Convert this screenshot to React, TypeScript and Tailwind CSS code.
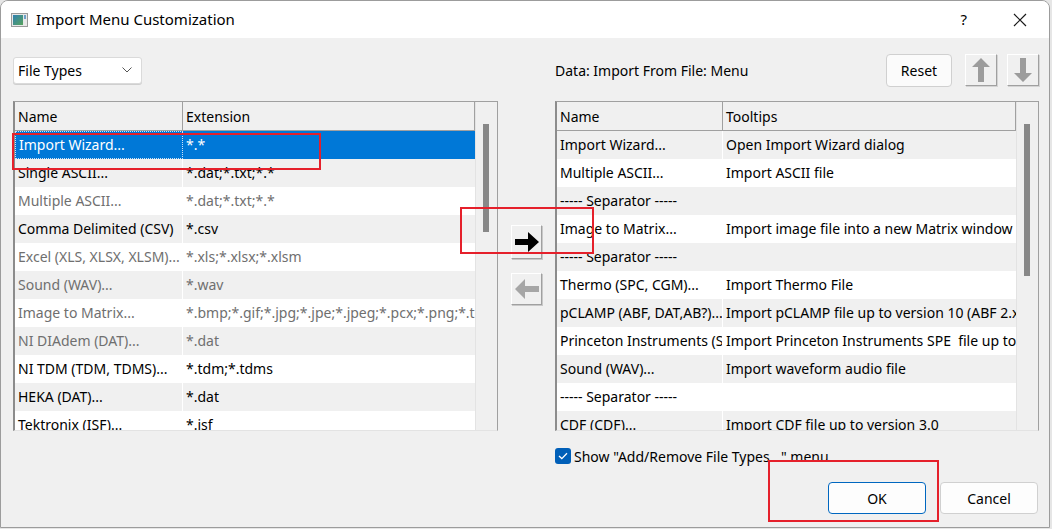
import React from "react";

type Row = { name: string; value: string; dim?: boolean; sep?: boolean };

const leftRows: Row[] = [
  { name: "Import Wizard...", value: "*.*" },
  { name: "Single ASCII...", value: "*.dat;*.txt;*.*" },
  { name: "Multiple ASCII...", value: "*.dat;*.txt;*.*", dim: true },
  { name: "Comma Delimited (CSV)", value: "*.csv" },
  { name: "Excel (XLS, XLSX, XLSM)...", value: "*.xls;*.xlsx;*.xlsm", dim: true },
  { name: "Sound (WAV)...", value: "*.wav", dim: true },
  { name: "Image to Matrix...", value: "*.bmp;*.gif;*.jpg;*.jpe;*.jpeg;*.pcx;*.png;*.tga;", dim: true },
  { name: "NI DIAdem (DAT)...", value: "*.dat", dim: true },
  { name: "NI TDM (TDM, TDMS)...", value: "*.tdm;*.tdms" },
  { name: "HEKA (DAT)...", value: "*.dat" },
  { name: "Tektronix (ISF)...", value: "*.isf" },
];

const rightRows: Row[] = [
  { name: "Import Wizard...", value: "Open Import Wizard dialog" },
  { name: "Multiple ASCII...", value: "Import ASCII file" },
  { name: "----- Separator -----", value: "", sep: true },
  { name: "Image to Matrix...", value: "Import image file into a new Matrix window" },
  { name: "----- Separator -----", value: "", sep: true },
  { name: "Thermo (SPC, CGM)...", value: "Import Thermo File" },
  { name: "pCLAMP (ABF, DAT,AB?)...", value: "Import pCLAMP file up to version 10 (ABF 2.x)" },
  { name: "Princeton Instruments (SPE)...", value: "Import Princeton Instruments SPE  file up to version 3" },
  { name: "Sound (WAV)...", value: "Import waveform audio file" },
  { name: "----- Separator -----", value: "", sep: true },
  { name: "CDF (CDF)...", value: "Import CDF file up to version 3.0" },
];

function Grid({
  rows,
  second,
  nameW,
  thumbH,
  selected,
  startGray,
}: {
  rows: Row[];
  second: string;
  nameW: string;
  thumbH: string;
  selected?: number;
  startGray: boolean;
}) {
  return (
    <div className="flex h-[330px] border border-[#a0a0a0] border-b-[#e3e3e3] border-l-2 border-l-[#8c8c8c] bg-[#f0f0f0]">
      <div className="flex flex-1 flex-col overflow-hidden">
        <div className="flex h-[29px] shrink-0 border-b border-r border-[#a0a0a0] bg-[#f0f0f0]">
          <div className={`${nameW} flex shrink-0 items-center border-r border-[#a0a0a0] px-[3px]`}>Name</div>
          <div className="flex flex-1 items-center px-[3px]">{second}</div>
        </div>
        {rows.map((r, i) => {
          const sel = i === selected;
          const gray = (i % 2 === 0) !== startGray;
          const bg = sel ? "bg-[#0078d7] text-white" : gray ? "bg-[#f0f0f0]" : "bg-white";
          const color = sel ? "" : r.dim ? "text-[#6f6f6f]" : "text-black";
          return (
            <div key={i} className={`flex h-[28px] shrink-0 ${bg} ${color}`}>
              {r.sep ? (
                <div className="flex flex-1 items-center whitespace-pre px-[3px] pb-[2px]">{r.name}</div>
              ) : (
                <>
                  <div
                    className={`${nameW} flex shrink-0 items-center overflow-hidden whitespace-pre px-[3px] pb-[2px] ${
                      sel ? "border border-dotted border-[#cfe3f7]" : "border-r border-white"
                    }`}
                  >
                    {r.name}
                  </div>
                  <div className="flex flex-1 items-center overflow-hidden whitespace-pre px-[3px] pb-[2px]">{r.value}</div>
                </>
              )}
            </div>
          );
        })}
      </div>
      <div className="w-[22px] shrink-0 border-l border-[#e3e3e3] pl-[7px] pt-[22px]">
        <div className={`w-[6px] ${thumbH} bg-[#888888]`} />
      </div>
    </div>
  );
}

function ArrowBtn({ children }: { children: React.ReactNode }) {
  return (
    <div className="flex h-[32px] w-[32px] items-center justify-center border border-t-white border-l-white border-b-[#a0a0a0] border-r-[#a0a0a0] bg-[#f0f0f0] shadow-[1px_1px_0_#d4d4d4]">
      {children}
    </div>
  );
}

export default function App() {
  return (
    <div className="relative h-[529px] w-[1052px] overflow-hidden bg-[#e6e6e6] font-['Noto_Sans','Liberation_Sans',sans-serif] text-[14px] text-black">
      <div className="flex h-[528px] w-[1050px] flex-col overflow-hidden rounded-t-[8px] border border-[#9c9c9c] bg-[#f0f0f0]">
        {/* title bar */}
        <div className="flex h-[37px] shrink-0 items-center bg-white pl-[10px]">
          <svg width="18" height="16" viewBox="0 0 18 16">
            <rect x="0.5" y="1.5" width="16" height="13" fill="#e8e8e8" stroke="#9a9a9a" />
            <defs>
              <linearGradient id="g" x1="0" y1="0" x2="1" y2="1">
                <stop offset="0" stopColor="#2f7fb0" />
                <stop offset="1" stopColor="#58a35c" />
              </linearGradient>
            </defs>
            <rect x="2" y="3" width="10" height="10" fill="url(#g)" />
            <rect x="13" y="3" width="2" height="4" fill="#6da0c8" />
          </svg>
          <span className="ml-[7px] text-[15px]">Import Menu Customization</span>
          <div className="flex-1" />
          <span className="mr-[46px] text-[15px]">?</span>
          <svg width="14" height="14" viewBox="0 0 14 14" className="mr-[22px]">
            <path d="M1 1 L13 13 M13 1 L1 13" stroke="#1a1a1a" strokeWidth="1.2" />
          </svg>
        </div>

        {/* body */}
        <div className="flex pl-[12px] pt-[15px]">
          {/* left column */}
          <div className="flex w-[485px] flex-col">
            <div className="flex h-[34px] items-center">
              <div className="flex h-[27px] w-[129px] items-center justify-between rounded-[3px] border border-[#dadada] bg-white pl-[4px] pr-[9px] shadow-[0_1px_0_#cfcfcf]">
                <span className="pt-[1px]">File Types</span>
                <svg width="10" height="6" viewBox="0 0 10 6">
                  <path d="M0.5 0.5 L5 5 L9.5 0.5" fill="none" stroke="#555" strokeWidth="1" />
                </svg>
              </div>
            </div>
            <div className="mt-[14px]">
              <Grid rows={leftRows} second="Extension" nameW="w-[168px]" thumbH="h-[108px]" selected={0} startGray={true} />
            </div>
          </div>

          {/* middle column */}
          <div className="flex w-[57px] flex-col items-center gap-[14px] pt-[172px]">
            <div className="flex h-[34px] w-[31px] items-center justify-center border border-t-white border-l-white border-b-[#a0a0a0] border-r-[#a0a0a0] bg-[#f0f0f0] shadow-[1px_1px_0_#c8c8c8]">
              <svg width="26" height="22" viewBox="0 0 26 22">
                <path d="M1 8 H14 V1 L25 11 L14 21 V14 H1 Z" fill="#000" />
              </svg>
            </div>
            <div className="flex h-[32px] w-[31px] items-center justify-center border border-t-white border-l-white border-b-[#a0a0a0] border-r-[#a0a0a0] bg-[#f0f0f0] shadow-[1px_1px_0_#c8c8c8]">
              <svg width="26" height="22" viewBox="0 0 26 22">
                <path d="M25 8 H11 V1 L1 11 L11 21 V14 H25 Z" fill="#a6a6a6" />
              </svg>
            </div>
          </div>

          {/* right column */}
          <div className="flex w-[484px] flex-col">
            <div className="flex h-[34px] items-center">
              <span className="pt-[1px]">Data: Import From File: Menu</span>
              <div className="flex-1" />
              <div className="flex h-[33px] w-[66px] items-center justify-center rounded-[4px] border border-[#d0d0d0] bg-[#fbfbfb]">
                Reset
              </div>
              <div className="ml-[13px]">
                <ArrowBtn>
                  <svg width="22" height="26" viewBox="0 0 22 26">
                    <path d="M11 1 L20 10 H14 V25 H8 V10 H2 Z" fill="#9c9c9c" />
                  </svg>
                </ArrowBtn>
              </div>
              <div className="ml-[10px]">
                <ArrowBtn>
                  <svg width="22" height="26" viewBox="0 0 22 26">
                    <path d="M8 1 H14 V16 H20 L11 25 L2 16 H8 Z" fill="#9c9c9c" />
                  </svg>
                </ArrowBtn>
              </div>
            </div>
            <div className="mt-[14px]">
              <Grid rows={rightRows} second="Tooltips" nameW="w-[166px]" thumbH="h-[152px]" startGray={false} />
            </div>
            <div className="mt-[17px] flex h-[16px] items-center">
              <div className="flex h-[16px] w-[16px] items-center justify-center rounded-[3px] bg-[#005fb8]">
                <svg width="10" height="8" viewBox="0 0 10 8">
                  <path d="M1 4 L3.8 6.6 L9 1.2" fill="none" stroke="white" strokeWidth="1.3" />
                </svg>
              </div>
              <span className="ml-[3px]">Show "Add/Remove File Types..." menu</span>
            </div>
            <div className="mt-[18px] flex justify-end gap-[14px] pr-[1px]">
              <div className="flex h-[32px] w-[98px] items-center justify-center rounded-[4px] border border-[#0067c0] bg-[#fdfdfd]">
                OK
              </div>
              <div className="flex h-[32px] w-[98px] items-center justify-center rounded-[4px] border border-[#d0d0d0] bg-[#fdfdfd]">
                Cancel
              </div>
            </div>
          </div>
        </div>
      </div>

      {/* red annotation boxes */}
      <div className="absolute left-[12px] top-[133px] h-[37px] w-[309px] border-2 border-[#e5202b]" />
      <div className="absolute left-[460px] top-[207px] h-[47px] w-[134px] border-2 border-[#e5202b]" />
      <div className="absolute left-[768px] top-[460px] h-[62px] w-[171px] border-2 border-[#e5202b]" />
    </div>
  );
}
